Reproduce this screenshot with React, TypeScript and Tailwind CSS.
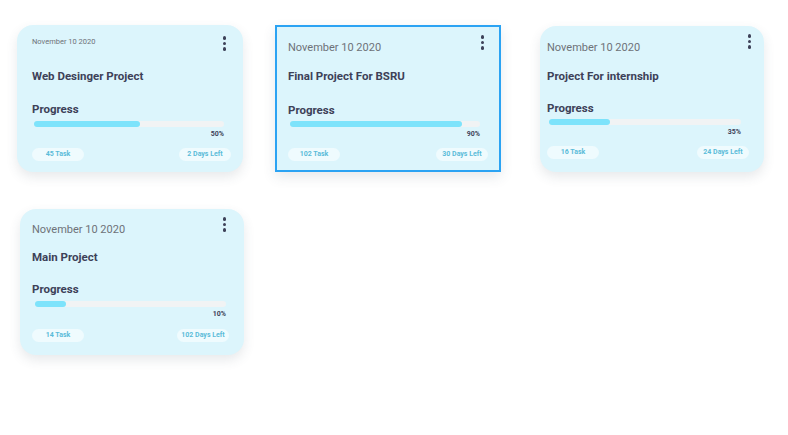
const projects = [
  {
    date: "November 10 2020",
    title: "Web Desinger Project",
    percent: "50%",
    fill: 56,
    tasks: "45 Task",
    left: "2 Days Left",
    wrap: "",
    card: "h-[147px] rounded-[16px] pt-[11px] pl-[15px] pr-[12px]",
    dateCls: "text-[7.5px] leading-[10px] mt-[1px]",
    dotsCls: "mr-[5px]",
    titleMt: "mt-[18px]",
    progMt: "mt-[18px]",
    barCls: "mt-[4px] ml-[2px] mr-[7px]",
    pctCls: "ml-[2px] mr-[7px]",
    pillsMt: "mt-[9px]",
  },
  {
    date: "November 10 2020",
    title: "Final Project For BSRU",
    percent: "90%",
    fill: 90.5,
    tasks: "102 Task",
    left: "30 Days Left",
    wrap: "",
    card: "h-[147px] border-2 border-[#2ba3f3] pt-[8px] pl-[11px] pr-[11px]",
    dateCls: "text-[11px] leading-[14px] mt-[6px]",
    dotsCls: "mr-[4px]",
    titleMt: "mt-[14px]",
    progMt: "mt-[19px]",
    barCls: "mt-[3px] ml-[2px] mr-[8px]",
    pctCls: "ml-[2px] mr-[8px]",
    pillsMt: "mt-[9px]",
  },
  {
    date: "November 10 2020",
    title: "Project For internship",
    percent: "35%",
    fill: 32,
    tasks: "16 Task",
    left: "24 Days Left",
    wrap: "mt-[1px] ml-[7px] w-[224px]",
    card: "h-[146px] rounded-[16px] pt-[8px] pl-[7px] pr-[15px]",
    dateCls: "text-[11px] leading-[14px] mt-[7px]",
    dotsCls: "-mr-[2px]",
    titleMt: "mt-[14px]",
    progMt: "mt-[17px]",
    barCls: "mt-[3px] ml-[2px] mr-[8px]",
    pctCls: "ml-[2px] mr-[8px]",
    pillsMt: "mt-[9px]",
  },
  {
    date: "November 10 2020",
    title: "Main Project",
    percent: "10%",
    fill: 16,
    tasks: "14 Task",
    left: "102 Days Left",
    wrap: "ml-[3px] w-[224px]",
    card: "h-[146px] rounded-[16px] pt-[8px] pl-[12px] pr-[15px]",
    dateCls: "text-[11px] leading-[14px] mt-[6px]",
    dotsCls: "mr-[3px]",
    titleMt: "mt-[13px]",
    progMt: "mt-[17px]",
    barCls: "mt-[4px] ml-[3px] mr-[3px]",
    pctCls: "ml-[3px] mr-[3px]",
    pillsMt: "mt-[10px]",
  },
];

type Project = (typeof projects)[number];

const Dots = ({ className }: { className: string }) => (
  <div className={`flex flex-col gap-[2px] ${className}`}>
    <span className="block w-[3.5px] h-[3.5px] rounded-full bg-[#3d4158]" />
    <span className="block w-[3.5px] h-[3.5px] rounded-full bg-[#3d4158]" />
    <span className="block w-[3.5px] h-[3.5px] rounded-full bg-[#3d4158]" />
  </div>
);

const ProjectCard = ({ p }: { p: Project }) => {
  return (
    <div className={p.wrap}>
      <div
        className={`flex flex-col bg-[#dcf5fc] shadow-[0_5px_12px_rgba(60,70,90,0.12)] ${p.card}`}
      >
        <div className="flex justify-between items-start">
          <span className={`text-[#6e7278] ${p.dateCls}`}>{p.date}</span>
          <Dots className={p.dotsCls} />
        </div>
        <h2
          className={`text-[11.5px] leading-[14px] font-bold text-[#3d4158] ${p.titleMt}`}
        >
          {p.title}
        </h2>
        <h3
          className={`text-[11.5px] leading-[16px] font-bold text-[#3d4158] ${p.progMt}`}
        >
          Progress
        </h3>
        <div className={`h-[6px] rounded-full bg-[#f1f3f4] ${p.barCls}`}>
          <div
            className="h-full rounded-full bg-[#7de3fb]"
            style={{ width: `${p.fill}%` }}
          />
        </div>
        <div className={`flex justify-end ${p.pctCls}`}>
          <span className="mt-[2px] text-[7px] leading-[10px] font-bold text-[#3d4158]">
            {p.percent}
          </span>
        </div>
        <div className={`flex justify-between ${p.pillsMt}`}>
          <span className="flex items-center justify-center w-[52px] h-[13px] rounded-full bg-[#effbfe] text-[7px] font-bold text-[#5bbcd9]">
            {p.tasks}
          </span>
          <span className="flex items-center justify-center w-[52px] h-[13px] rounded-full bg-[#effbfe] text-[7px] font-bold text-[#5bbcd9]">
            {p.left}
          </span>
        </div>
      </div>
    </div>
  );
};

const App = () => {
  return (
    <main
      className="w-[788px] h-[435px] bg-white pl-[17px] pt-[25px]"
      style={{ fontFamily: "Roboto, 'Liberation Sans', sans-serif" }}
    >
      <div className="grid grid-cols-[226px_226px_231px] gap-x-[32px] gap-y-[37px] items-start">
        {projects.map((p) => (
          <ProjectCard key={p.title} p={p} />
        ))}
      </div>
    </main>
  );
};

export default App;
